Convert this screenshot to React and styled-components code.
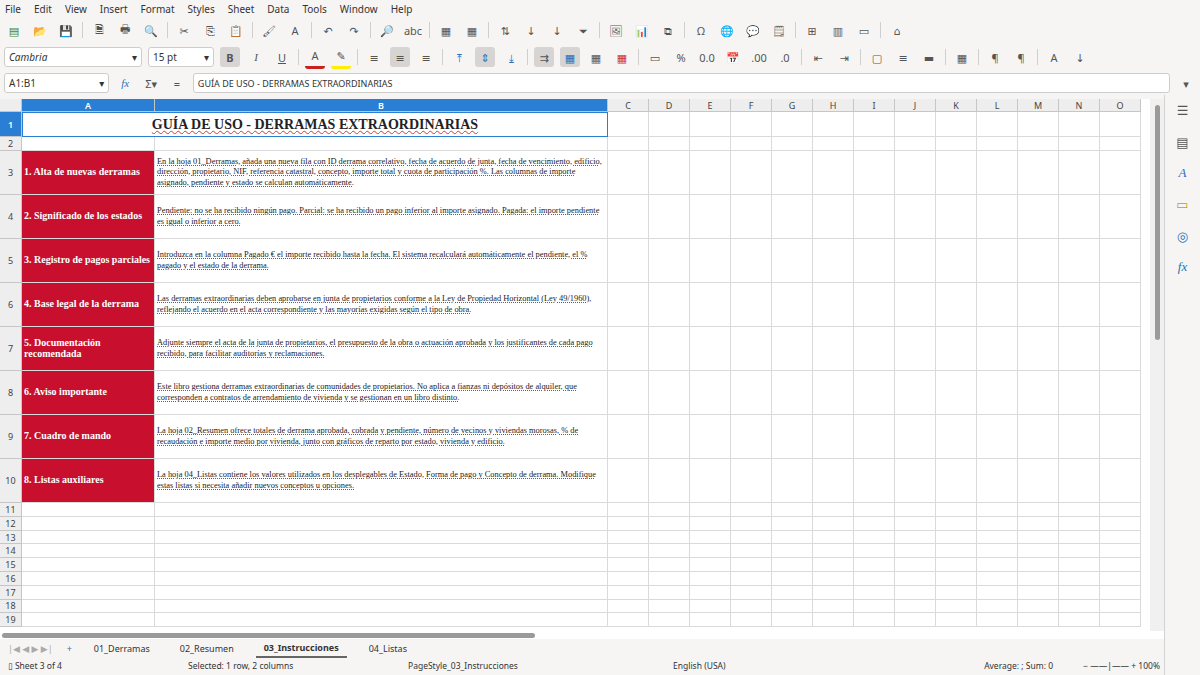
import React from 'react';
import styled, { createGlobalStyle } from 'styled-components';

const Global = createGlobalStyle`
  html, body { margin: 0; padding: 0; background: #f6f5f4; overflow: hidden; }
  body { font-family: "Noto Sans", "DejaVu Sans", sans-serif; font-size: 9px; color: #333; }
`;

const Window = styled.div`
  width: 1200px; height: 675px; display: flex; flex-direction: column; background: #f6f5f4;
`;
const MenuBar = styled.div`
  height: 17px; display: flex; align-items: center; gap: 13px; padding-left: 5px; font-size: 10px; color: #333;
`;
const ToolBar = styled.div`
  height: ${p => p.$h}px; display: flex; align-items: center; gap: 6px; padding: 0 4px;
`;
const Icon = styled.span`
  width: 16px; height: 16px; display: inline-flex; align-items: center; justify-content: center;
  font-size: 11px; color: ${p => p.$c || '#555'};
  background: ${p => (p.$on ? '#d6d5d3' : 'transparent')}; border-radius: 3px;
  padding: 2px;
`;
const Sep = styled.span`width: 1px; height: 16px; background: #d0cfcd;`;
const Combo = styled.div`
  width: ${p => p.$w}px; height: 20px; background: #fff; border: 1px solid #cfcdcb; border-radius: 3px;
  display: flex; align-items: center; justify-content: space-between; padding: 0 4px; box-sizing: border-box;
  font-size: 10px; font-style: ${p => (p.$i ? 'italic' : 'normal')}; color: #333;
`;
const Body = styled.div`flex: 1; display: flex; min-height: 0;`;
const Main = styled.div`flex: 1; display: flex; flex-direction: column; min-width: 0;`;
const SideBar = styled.div`
  width: 35px; border-left: 1px solid #d5d3d1; display: flex; flex-direction: column; align-items: center;
  gap: 14px; padding-top: 6px; color: #2a6fb8; font-size: 13px;
`;
const Sheet = styled.div`display: flex; height: 532px; background: #fff; margin-top: 4px;`;
const Grid = styled.div`
  flex: 1; display: grid; overflow: hidden;
  grid-template-columns: 22px 133px 453px repeat(13, 41px);
  grid-template-rows: 13px 25px 14px repeat(8, 44px) repeat(9, 13.8px);
  font-family: "Liberation Serif", serif;
`;
const ColHead = styled.div`
  background: ${p => (p.$sel ? '#2a7fd4' : '#eeeeee')}; color: ${p => (p.$sel ? '#fff' : '#444')};
  font-family: "Noto Sans", sans-serif; font-size: 9px; font-weight: ${p => (p.$sel ? 600 : 400)};
  display: flex; align-items: center; justify-content: center;
  border-right: 1px solid #c6c6c6; border-bottom: 1px solid #c6c6c6;
`;
const RowHead = styled(ColHead)``;
const Cell = styled.div`
  border-right: 1px solid #dadada; border-bottom: 1px solid #dadada; overflow: hidden;
  background: ${p => (p.$red ? '#c8102e' : '#fff')};
  color: ${p => (p.$red ? '#fff' : '#222')};
  font-weight: ${p => (p.$red ? 700 : 400)};
  font-size: ${p => (p.$red ? '10px' : '8.4px')};
  display: flex; align-items: center; padding: 0 2px; line-height: 10.6px;
`;
const Title = styled.div`
  grid-column: 2 / 4; border: 1px solid #2a7fd4; display: flex; align-items: center; justify-content: center;
  font-weight: 700; font-size: 14px; color: #222; text-decoration: underline wavy #d33; text-decoration-thickness: 1px;
`;
const Text = styled.span`text-decoration: underline dotted #c33; text-underline-offset: 1px;`;
const VScroll = styled.div`
  width: 14px; background: #f0f0f0; display: flex; justify-content: center; padding-top: 6px;
`;
const Thumb = styled.div`width: 5px; height: 235px; background: #9a9a9a; border-radius: 3px;`;
const HScroll = styled.div`height: 8px; background: #fff; display: flex; align-items: center; padding-left: 2px;`;
const HThumb = styled.div`width: 533px; height: 5px; background: #9a9a9a; border-radius: 3px;`;
const Tabs = styled.div`
  height: 18px; display: flex; align-items: center; gap: 14px; padding-left: 8px; font-size: 9px;
`;
const Tab = styled.span`
  padding: 2px 8px; font-weight: ${p => (p.$on ? 700 : 400)};
  border-bottom: ${p => (p.$on ? '2px solid #666' : 'none')}; color: #333;
`;
const Status = styled.div`
  height: 17px; display: grid; align-items: center; font-size: 8.5px; color: #333;
  grid-template-columns: 180px 220px 265px 160px 220px 1fr;
  padding-left: 8px;
`;

const cols = ['C','D','E','F','G','H','I','J','K','L','M','N','O'];
const rows = [
  ['1. Alta de nuevas derramas', 'En la hoja 01_Derramas, añada una nueva fila con ID derrama correlativo, fecha de acuerdo de junta, fecha de vencimiento, edificio, dirección, propietario, NIF, referencia catastral, concepto, importe total y cuota de participación %. Las columnas de importe asignado, pendiente y estado se calculan automáticamente.'],
  ['2. Significado de los estados', 'Pendiente: no se ha recibido ningún pago. Parcial: se ha recibido un pago inferior al importe asignado. Pagada: el importe pendiente es igual o inferior a cero.'],
  ['3. Registro de pagos parciales', 'Introduzca en la columna Pagado € el importe recibido hasta la fecha. El sistema recalculará automáticamente el pendiente, el % pagado y el estado de la derrama.'],
  ['4. Base legal de la derrama', 'Las derramas extraordinarias deben aprobarse en junta de propietarios conforme a la Ley de Propiedad Horizontal (Ley 49/1960), reflejando el acuerdo en el acta correspondiente y las mayorías exigidas según el tipo de obra.'],
  ['5. Documentación recomendada', 'Adjunte siempre el acta de la junta de propietarios, el presupuesto de la obra o actuación aprobada y los justificantes de cada pago recibido, para facilitar auditorías y reclamaciones.'],
  ['6. Aviso importante', 'Este libro gestiona derramas extraordinarias de comunidades de propietarios. No aplica a fianzas ni depósitos de alquiler, que corresponden a contratos de arrendamiento de vivienda y se gestionan en un libro distinto.'],
  ['7. Cuadro de mando', 'La hoja 02_Resumen ofrece totales de derrama aprobada, cobrada y pendiente, número de vecinos y viviendas morosas, % de recaudación e importe medio por vivienda, junto con gráficos de reparto por estado, vivienda y edificio.'],
  ['8. Listas auxiliares', 'La hoja 04_Listas contiene los valores utilizados en los desplegables de Estado, Forma de pago y Concepto de derrama. Modifique estas listas si necesita añadir nuevos conceptos u opciones.'],
];

const Blank = ({ n }) => Array.from({ length: n }, (_, i) => <Cell key={i} />);

const tb1 = ['▤','📂','💾','|','🗎','🖶','🔍','|','✂','⎘','📋','|','🖌','A','|','↶','↷','|','🔎','abc','|','▦','▦','|','⇅','↓','↓','⏷','|','🖼','📊','⧉','|','Ω','🌐','💬','🗒','|','⊞','▥','▭','|','⌂'];
const tb2 = ['≡','≡','≡','|','⤒','⇕','⤓','|','⇉','▦','▦','▦','|','▭','%','0.0','📅','.00','.0','|','⇤','⇥','|','▢','≡','▬','|','▦','|','¶','¶','|','A','↓'];

export default function App() {
  return (
    <Window>
      <Global />
      <MenuBar>
        {['File','Edit','View','Insert','Format','Styles','Sheet','Data','Tools','Window','Help'].map(m => <span key={m}>{m}</span>)}
      </MenuBar>
      <ToolBar $h={26}>
        {tb1.map((t, i) => (t === '|' ? <Sep key={i} /> : <Icon key={i} $c={i < 3 ? '#3a8a3a' : undefined}>{t}</Icon>))}
      </ToolBar>
      <ToolBar $h={28}>
        <Combo $w={138} $i>Cambria <span>▾</span></Combo>
        <Combo $w={66}>15 pt <span>▾</span></Combo>
        <Icon $on style={{ fontWeight: 700 }}>B</Icon>
        <Icon style={{ fontStyle: 'italic', fontFamily: 'serif' }}>I</Icon>
        <Icon style={{ textDecoration: 'underline' }}>U</Icon>
        <Sep />
        <Icon style={{ borderBottom: '3px solid #c9211e' }}>A</Icon>
        <Icon style={{ borderBottom: '3px solid #ffee00' }}>✎</Icon>
        <Sep />
        <Icon>≡</Icon><Icon $on>≡</Icon><Icon>≡</Icon><Sep /><Icon $c="#2a6fb8">⤒</Icon><Icon $on $c="#2a6fb8">⇕</Icon><Icon $c="#2a6fb8">⤓</Icon><Sep />
        <Icon $on>⇉</Icon><Icon $on $c="#2a6fb8">▦</Icon><Icon>▦</Icon><Icon $c="#c33">▦</Icon>
        {tb2.slice(12).map((t, i) => (t === '|' ? <Sep key={i} /> : <Icon key={i}>{t}</Icon>))}
      </ToolBar>
      <ToolBar $h={24}>
        <Combo $w={106}>A1:B1 <span>▾</span></Combo>
        <Icon $c="#2a6fb8" style={{ fontStyle: 'italic', fontFamily: 'serif' }}>fx</Icon>
        <Icon>Σ▾</Icon>
        <Icon>=</Icon>
        <Combo $w={985} style={{ fontSize: 9, justifyContent: 'flex-start' }}>GUÍA DE USO - DERRAMAS EXTRAORDINARIAS</Combo>
        <Icon>▾</Icon>
      </ToolBar>
      <Body>
        <Main>
          <Sheet>
            <Grid>
              <ColHead />
              <ColHead $sel>A</ColHead>
              <ColHead $sel>B</ColHead>
              {cols.map(c => <ColHead key={c}>{c}</ColHead>)}

              <RowHead $sel>1</RowHead>
              <Title>GUÍA DE USO - DERRAMAS EXTRAORDINARIAS</Title>
              <Blank n={13} />

              <RowHead>2</RowHead>
              <Blank n={15} />

              {rows.map(([a, b], i) => (
                <React.Fragment key={a}>
                  <RowHead>{i + 3}</RowHead>
                  <Cell $red>{a}</Cell>
                  <Cell><Text>{b}</Text></Cell>
                  <Blank n={13} />
                </React.Fragment>
              ))}

              {Array.from({ length: 9 }, (_, i) => (
                <React.Fragment key={i}>
                  <RowHead>{i + 11}</RowHead>
                  <Blank n={15} />
                </React.Fragment>
              ))}
            </Grid>
            <VScroll><Thumb /></VScroll>
          </Sheet>
          <HScroll><HThumb /></HScroll>
          <Tabs>
            <span style={{ color: '#aaa' }}>|◀ ◀ ▶ ▶|</span>
            <span style={{ color: '#2a6fb8' }}>+</span>
            <Tab>01_Derramas</Tab>
            <Tab>02_Resumen</Tab>
            <Tab $on>03_Instrucciones</Tab>
            <Tab>04_Listas</Tab>
          </Tabs>
          <Status>
            <span>▯ Sheet 3 of 4</span>
            <span>Selected: 1 row, 2 columns</span>
            <span>PageStyle_03_Instrucciones</span>
            <span>English (USA)</span>
            <span style={{ textAlign: 'right' }}>Average: ; Sum: 0</span>
            <span style={{ textAlign: 'right', paddingRight: 4 }}>− ——|—— + 100%</span>
          </Status>
        </Main>
        <SideBar>
          <span style={{ color: '#555' }}>☰</span>
          <span style={{ color: '#555' }}>▤</span>
          <span style={{ fontFamily: 'serif', fontStyle: 'italic' }}>A</span>
          <span style={{ color: '#c7a000' }}>▭</span>
          <span>◎</span>
          <span style={{ fontFamily: 'serif', fontStyle: 'italic' }}>fx</span>
        </SideBar>
      </Body>
    </Window>
  );
}
